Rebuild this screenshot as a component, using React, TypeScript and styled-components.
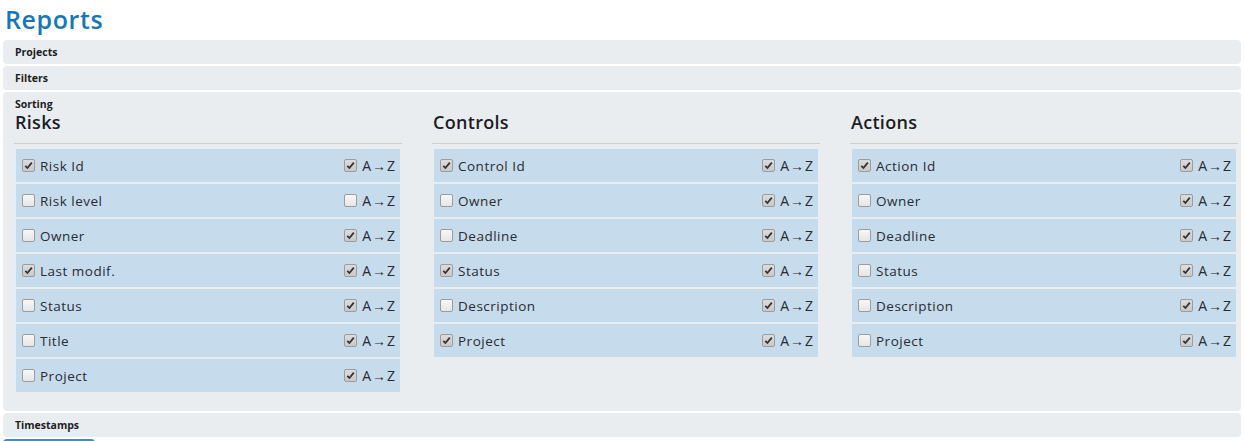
import React from "react";
import styled, { createGlobalStyle } from "styled-components";

const GlobalStyle = createGlobalStyle`
  body {
    margin: 0 3px;
    background: #fff;
    font-family: "Open Sans", "Liberation Sans", sans-serif;
    color: #222;
  }
`;

const Title = styled.h1`
  margin: 0;
  height: 40px;
  padding-left: 2px;
  font-size: 25px;
  line-height: 38px;
  font-weight: 600;
  letter-spacing: 0.6px;
  color: #1a76b3;
`;

const Panel = styled.section`
  background: #e9edf0;
  border-radius: 4px;
  margin-bottom: 2px;
  padding: 0 3px 0 11px;
`;

const PanelTitle = styled.div<{ $open?: boolean }>`
  font-size: 10.5px;
  font-weight: 700;
  color: #1c1c24;
  padding-left: 1px;
  line-height: ${(p) => (p.$open ? "16px" : "24px")};
  padding-top: ${(p) => (p.$open ? "4px" : "0")};
`;

const Columns = styled.div`
  display: grid;
  grid-template-columns: repeat(3, 388px);
  column-gap: 30px;
  padding-bottom: 17px;
`;

const Column = styled.div`
  display: flex;
  flex-direction: column;
`;

const Heading = styled.h3`
  margin: -2px 0 5px;
  padding: 0 0 9px 1px;
  font-size: 18px;
  font-weight: 600;
  line-height: 24px;
  letter-spacing: 0.3px;
  color: #1c1c24;
  border-bottom: 1px solid #d3d0c6;
`;

const Row = styled.label`
  display: flex;
  align-items: center;
  height: 33px;
  margin: 0 2px 2px;
  padding: 0 5px 0 6px;
  background: #c6dcec;
  font-size: 13.5px;
  letter-spacing: 0.5px;
  color: #2a2a33;
`;

const Name = styled.span`
  flex: 1;
  margin-left: 5px;
`;

const Order = styled.span`
  margin-left: 5px;
  letter-spacing: 0;
  font-size: 14px;
`;

const Arrow = styled.span`
  font-family: "Liberation Sans", sans-serif;
  margin: 0 1px;
`;

const Box = styled.span<{ $on: boolean }>`
  display: inline-flex;
  align-items: center;
  justify-content: center;
  width: 11px;
  height: 11px;
  border: 1px solid #9c9c9c;
  border-radius: 2px;
  background: ${(p) =>
    p.$on
      ? "linear-gradient(#dcdcdc, #c9c9c9)"
      : "linear-gradient(#f7f7f7, #e6e6e6)"};
  box-sizing: content-box;
`;

function Check({ on }: { on: boolean }) {
  return (
    <Box $on={on}>
      {on && (
        <svg width="9" height="9" viewBox="0 0 9 9">
          <path d="M1.3 4.8 L3.4 7 L7.8 1.6" stroke="#333" strokeWidth="1.8" fill="none" />
        </svg>
      )}
    </Box>
  );
}

type Field = { name: string; shown: boolean; sorted: boolean };

const groups: { title: string; fields: Field[] }[] = [
  {
    title: "Risks",
    fields: [
      { name: "Risk Id", shown: true, sorted: true },
      { name: "Risk level", shown: false, sorted: false },
      { name: "Owner", shown: false, sorted: true },
      { name: "Last modif.", shown: true, sorted: true },
      { name: "Status", shown: false, sorted: true },
      { name: "Title", shown: false, sorted: true },
      { name: "Project", shown: false, sorted: true },
    ],
  },
  {
    title: "Controls",
    fields: [
      { name: "Control Id", shown: true, sorted: true },
      { name: "Owner", shown: false, sorted: true },
      { name: "Deadline", shown: false, sorted: true },
      { name: "Status", shown: true, sorted: true },
      { name: "Description", shown: false, sorted: true },
      { name: "Project", shown: true, sorted: true },
    ],
  },
  {
    title: "Actions",
    fields: [
      { name: "Action Id", shown: true, sorted: true },
      { name: "Owner", shown: false, sorted: true },
      { name: "Deadline", shown: false, sorted: true },
      { name: "Status", shown: false, sorted: true },
      { name: "Description", shown: false, sorted: true },
      { name: "Project", shown: false, sorted: true },
    ],
  },
];

const BlueButton = styled.div`
  width: 92px;
  height: 10px;
  background: #1a9be3;
  border-radius: 4px 4px 0 0;
  margin-top: 2px;
`;

export default function App() {
  return (
    <>
      <GlobalStyle />
      <Title>Reports</Title>
      <Panel>
        <PanelTitle>Projects</PanelTitle>
      </Panel>
      <Panel>
        <PanelTitle>Filters</PanelTitle>
      </Panel>
      <Panel>
        <PanelTitle $open>Sorting</PanelTitle>
        <Columns>
          {groups.map((g) => (
            <Column key={g.title}>
              <Heading>{g.title}</Heading>
              {g.fields.map((f) => (
                <Row key={f.name}>
                  <Check on={f.shown} />
                  <Name>{f.name}</Name>
                  <Check on={f.sorted} />
                  <Order>
                    A<Arrow>→</Arrow>Z
                  </Order>
                </Row>
              ))}
            </Column>
          ))}
        </Columns>
      </Panel>
      <Panel>
        <PanelTitle>Timestamps</PanelTitle>
      </Panel>
      <BlueButton />
    </>
  );
}
